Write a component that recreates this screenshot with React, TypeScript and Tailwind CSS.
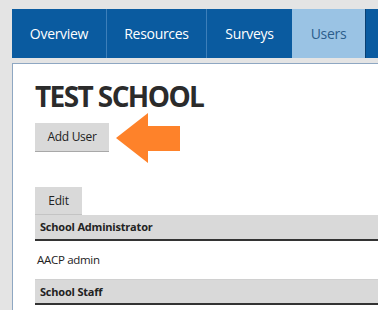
import React from "react";

export default function App() {
  const font = { fontFamily: '"Open Sans", "Noto Sans", sans-serif' };
  return (
    <div className="w-[378px] h-[310px] overflow-hidden bg-[#e4e4e4]" style={font}>
      <div className="pl-[12px] pt-[9px]">
        <div className="flex h-[49px] bg-[#0a5ba0] w-[400px]">
          <div className="flex items-center justify-center w-[95px] text-white text-[14px] tracking-[-0.3px] border-r border-[#3d7fba]">Overview</div>
          <div className="flex items-center justify-center w-[100px] text-white text-[14px] tracking-[-0.3px] border-r border-[#3d7fba]">Resources</div>
          <div className="flex items-center justify-center w-[85px] text-white text-[14px] tracking-[-0.3px]">Surveys</div>
          <div className="flex items-center justify-center w-[73px] bg-[#9ac3e4] text-[#2c5e8c] text-[14px] tracking-[-0.3px]">Users</div>
          <div className="w-px bg-[#0a3f70]"></div>
        </div>
        <div className="mt-[5px] w-[400px] h-[260px] bg-white border-l border-t border-[#8ea7c2] pl-[22px] pt-[14px]">
          <h1 className="text-[28px] font-bold text-[#2b2b2b] leading-[36px] tracking-[-1.6px]">TEST SCHOOL</h1>
          <div className="relative mt-[9px] h-[29px]">
            <button className="h-[29px] w-[74px] bg-[#d9d9d9] border-b border-[#a8a8a8] text-[12px] tracking-[-0.3px] text-[#222]">Add User</button>
            <svg className="absolute left-[81px] top-[-10px]" width="64" height="51" viewBox="0 0 64 51">
              <polygon points="0,25 32,0 32,13 64,13 64,38 32,38 32,50" fill="#fe822a" />
            </svg>
          </div>
          <div className="mt-[35px] w-[344px]">
            <div className="w-[47px] h-[28px] bg-[#d9d9d9] border-b border-[#c4c4c4] flex items-center justify-center text-[12px] tracking-[-0.2px] text-[#222]">Edit</div>
            <div className="h-[26px] bg-[#d9d9d9] border-b-2 border-[#333] flex items-center pl-[5px] pt-[1px] text-[11px] tracking-[-0.2px] font-bold text-[#222]">School Administrator</div>
            <div className="h-[39px] flex items-center pl-[2px] text-[11.5px] tracking-[-0.3px] text-[#222] border-b border-[#d0d0d0]">AACP admin</div>
            <div className="h-[25px] bg-[#d9d9d9] border-b-2 border-[#333] flex items-center pl-[5px] pt-[1px] text-[11px] tracking-[-0.2px] font-bold text-[#222]">School Staff</div>
          </div>
        </div>
      </div>
    </div>
  );
}
